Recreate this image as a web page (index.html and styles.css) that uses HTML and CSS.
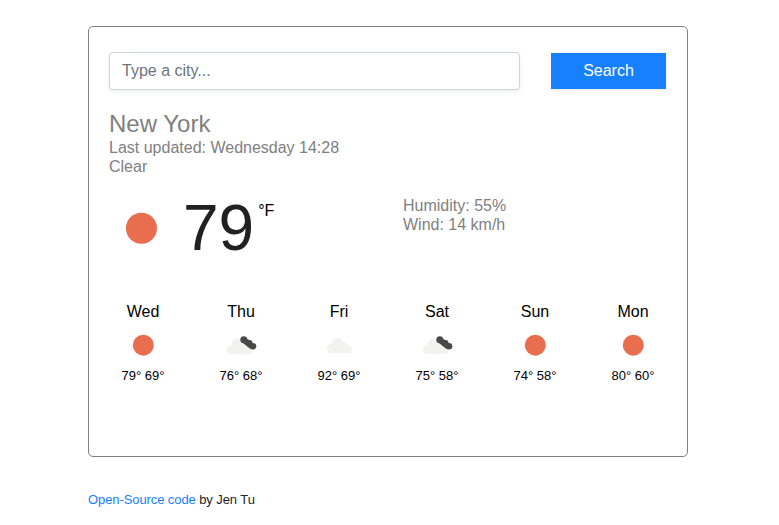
FILE: index.html
```html
<!DOCTYPE html>
<html lang="en">
<head>
<meta charset="utf-8">
<title>Weather</title>
<link rel="stylesheet" href="styles.css">
</head>
<body>
<svg class="defs" width="0" height="0" aria-hidden="true">
  <symbol id="sun" viewBox="0 0 50 50"><circle cx="25.3" cy="25.2" r="10.5" fill="#e96e50"/></symbol>
  <symbol id="cloud" viewBox="0 0 50 50"><g fill="#f2f2f1"><circle cx="17.2" cy="28.7" r="4.4"/><circle cx="23.2" cy="23.2" r="5.5"/><circle cx="28.8" cy="26.8" r="4.8"/><circle cx="34" cy="29.4" r="3.7"/><path d="M17.2 25h11L34 27v6.1H17.2z"/></g></symbol>
  <symbol id="clouds" viewBox="0 0 50 50"><g fill="#f2f2f1"><circle cx="15.3" cy="29.8" r="4.5"/><circle cx="21.3" cy="24.2" r="5.6"/><circle cx="27" cy="27.8" r="4.9"/><circle cx="32.4" cy="30.5" r="3.8"/><path d="M15.3 26h11l6.1 2v6.3H15.3z"/></g><g fill="#484848"><circle cx="27.8" cy="19.7" r="3.5"/><circle cx="33.3" cy="23.2" r="3.3"/><circle cx="37" cy="26.3" r="3.3"/><path d="M28 17l6 3.5 3 4-2.6 4.5-7.4-6z"/></g></symbol>
</svg>
<main class="container">
  <section class="card">
    <form class="search">
      <input class="search-input" type="text" placeholder="Type a city...">
      <button class="search-button" type="button">Search</button>
    </form>
    <h1 class="city">New York</h1>
    <ul class="details">
      <li>Last updated: Wednesday 14:28</li>
      <li>Clear</li>
    </ul>
    <div class="current">
      <div class="reading">
        <svg class="current-icon"><use href="#sun"/></svg>
        <strong class="temperature">79</strong><span class="unit">°F</span>
      </div>
      <ul class="details conditions">
        <li>Humidity: 55%</li>
        <li>Wind: 14 km/h</li>
      </ul>
    </div>
    <div class="forecast">
      <div class="day"><div class="day-name">Wed</div><svg class="day-icon"><use href="#sun"/></svg><div class="day-temps">79° 69°</div></div>
      <div class="day"><div class="day-name">Thu</div><svg class="day-icon"><use href="#clouds"/></svg><div class="day-temps">76° 68°</div></div>
      <div class="day"><div class="day-name">Fri</div><svg class="day-icon"><use href="#cloud"/></svg><div class="day-temps">92° 69°</div></div>
      <div class="day"><div class="day-name">Sat</div><svg class="day-icon"><use href="#clouds"/></svg><div class="day-temps">75° 58°</div></div>
      <div class="day"><div class="day-name">Sun</div><svg class="day-icon"><use href="#sun"/></svg><div class="day-temps">74° 58°</div></div>
      <div class="day"><div class="day-name">Mon</div><svg class="day-icon"><use href="#sun"/></svg><div class="day-temps">80° 60°</div></div>
    </div>
  </section>
  <footer class="footer"><a href="#">Open-Source code</a> by Jen Tu</footer>
</main>
</body>
</html>
```
FILE: styles.css
```css
* { box-sizing: border-box; }

body {
  margin: 0;
  background: #fff;
  color: #000;
  font: 16px/19px "Liberation Sans", Arial, sans-serif;
}

.defs { display: block; }

.container {
  width: 600px;
  margin: 26px 0 0 88px;
}

.card {
  height: 431px;
  padding: 25px 20px 0;
  border: 1px solid #808080;
  border-radius: 5px;
}

.search {
  display: flex;
  align-items: center;
  gap: 31px;
}

.search-input {
  width: 411px;
  height: 38px;
  padding: 0 12px;
  border: 1px solid #ced4da;
  border-radius: 4px;
  box-shadow: 0 2px 4px rgba(0, 0, 0, .075);
  font: inherit;
}

.search-input::placeholder { color: #6c757d; opacity: 1; }

.search-button {
  width: 115px;
  height: 36px;
  padding: 0 0 2px;
  border: 0;
  background: #1780ff;
  box-shadow: 0 2px 4px rgba(0, 0, 0, .075);
  color: #fff;
  font: inherit;
}

.city {
  margin: 19px 0 0;
  color: #808080;
  font-size: 24px;
  font-weight: 400;
  line-height: 29px;
}

.details {
  margin: 0;
  padding: 0;
  color: #808080;
  list-style: none;
}

.current {
  display: flex;
  height: 126px;
  padding-top: 20px;
}

.reading {
  display: flex;
  align-items: flex-start;
  width: 294px;
}

.current-icon {
  width: 74px;
  height: 74px;
  margin: -5px 0 0 -5px;
}

.temperature {
  margin-left: 5px;
  color: #212121;
  font-size: 64px;
  font-weight: 400;
  line-height: 64px;
}

.unit {
  margin: 5px 0 0 4px;
}

.forecast {
  display: flex;
  margin: 0 -15px;
}

.day {
  width: 98px;
  text-align: center;
}

.day-icon {
  display: block;
  width: 50px;
  height: 50px;
  margin: -1px auto 0;
}

.day-temps {
  margin-top: -3px;
  font-size: 13px;
  line-height: 18px;
}

.footer {
  margin-top: 33px;
  color: #212529;
  font-size: 13px;
  letter-spacing: -0.09px;
}

.footer a {
  color: #1780ff;
  text-decoration: none;
}
```
